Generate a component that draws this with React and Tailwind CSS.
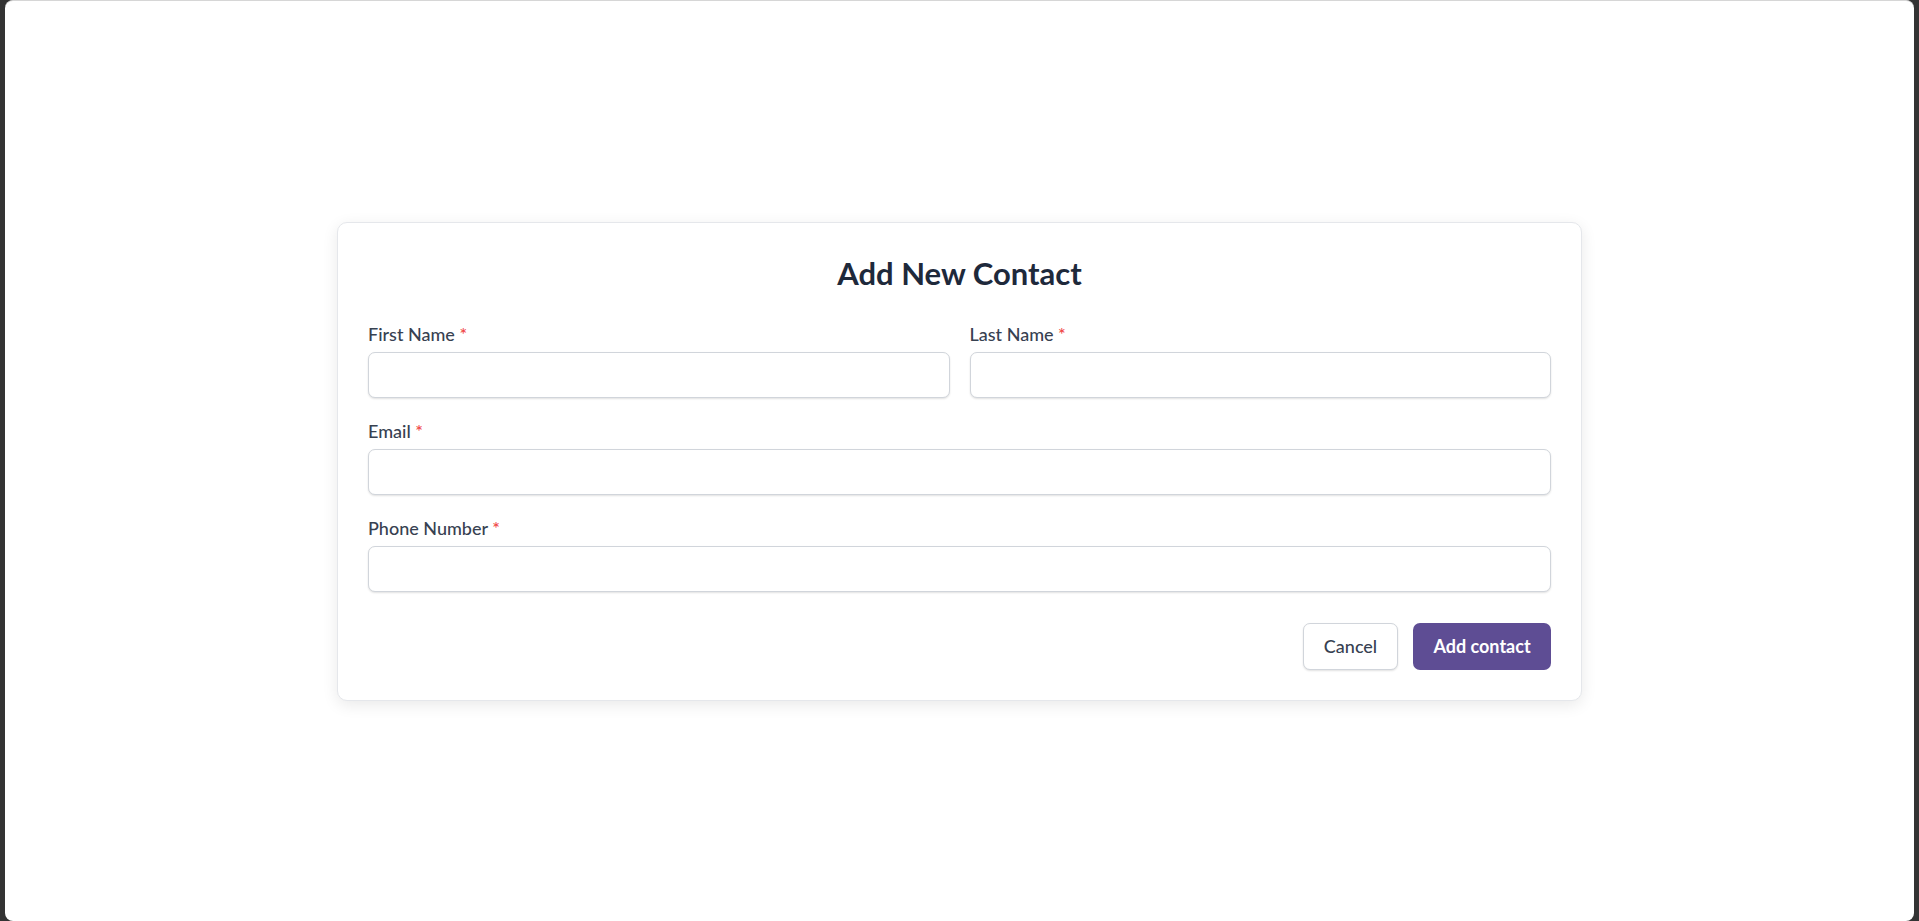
function Field({ label, className = '' }) {
  return (
    <div className={className}>
      <label className="mb-[5px] block text-[18px] font-medium leading-[25px] text-[#374151]">
        {label} <span className="text-[#ef4444]">*</span>
      </label>
      <input
        type="text"
        className="block h-[46px] w-full rounded-[7px] border border-[#d1d5db] bg-white px-4 text-[18px] text-[#1f2937] shadow-[0_1px_2px_rgba(0,0,0,0.12)] outline-none"
      />
    </div>
  )
}

export default function App() {
  return (
    <div
      className="h-screen bg-[#333333] px-[5px]"
      style={{ fontFamily: 'Lato, "Noto Sans", sans-serif' }}
    >
      <div className="flex h-full items-center justify-center rounded-[8px] border-t border-[#d6d6d6] bg-white">
        <div className="w-[1245px] rounded-[10px] border border-[#e5e7eb] bg-white p-[30px] shadow-[0_4px_16px_rgba(0,0,0,0.09)]">
          <h2 className="mb-[29px] text-center text-[31px] font-bold leading-[40px] text-[#1e293b]">
            Add New Contact
          </h2>

          <div className="space-y-[21px]">
            <div className="grid grid-cols-2 gap-5">
              <Field label="First Name" />
              <Field label="Last Name" />
            </div>
            <Field label="Email" />
            <Field label="Phone Number" />
          </div>

          <div className="mt-[31px] flex justify-end gap-[15px]">
            <button className="h-[47px] w-[95px] rounded-[7px] border border-[#d1d5db] bg-white text-[18px] font-medium text-[#374151] shadow-[0_1px_2px_rgba(0,0,0,0.12)]">
              Cancel
            </button>
            <button className="h-[47px] w-[138px] rounded-[7px] bg-[#5e4d94] text-[18px] font-bold text-white">
              Add contact
            </button>
          </div>
        </div>
      </div>
    </div>
  )
}
